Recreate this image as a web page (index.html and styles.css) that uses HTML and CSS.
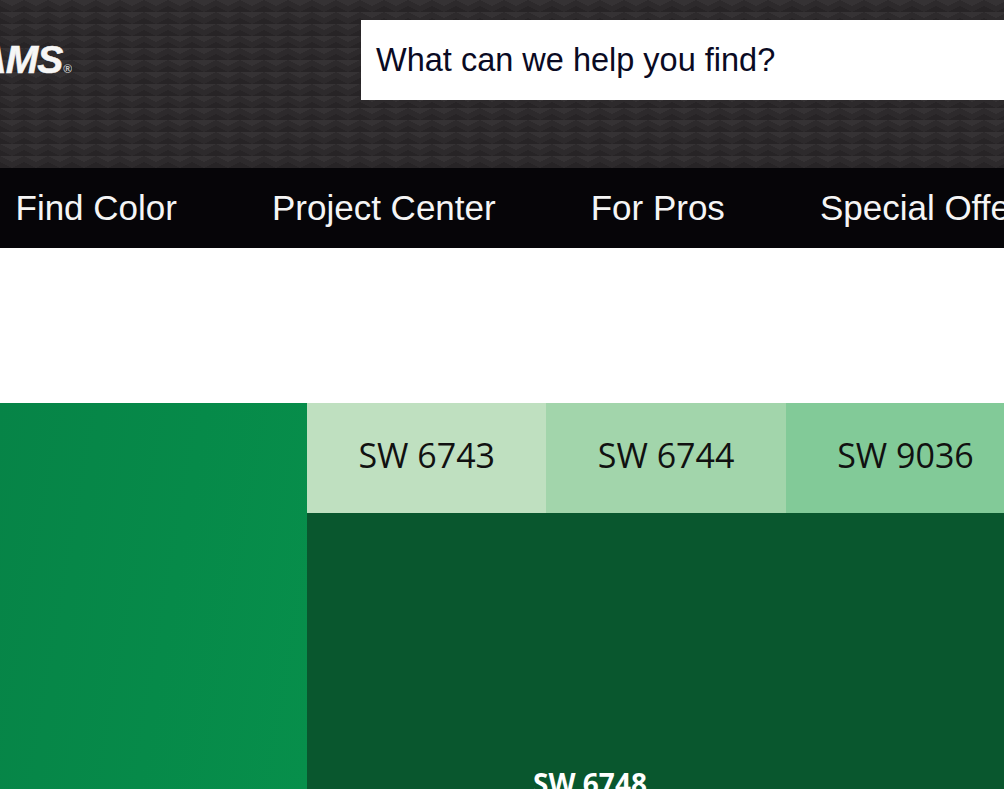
FILE: index.html
```html
<!DOCTYPE html>
<html lang="en">
  <head>
    <meta charset="UTF-8" />
    <meta name="viewport" content="width=device-width, initial-scale=1.0" />
    <title>Find Color</title>
    <link rel="stylesheet" href="styles.css">
  </head>
  <body>
    <header class="top-bar">
      <div class="logo">
        <span class="logo-text">WILLIAMS</span><span class="logo-mark">®</span>
      </div>
      <div class="search">What can we help you find?</div>
    </header>

    <nav class="main-nav">
      <a href="#">Find Color</a>
      <a href="#">Project Center</a>
      <a href="#">For Pros</a>
      <a href="#">Special Offers</a>
    </nav>

    <main class="palette">
      <div class="main-color"></div>
      <div class="shades">
        <div class="shade-row">
          <div class="shade shade-1">SW 6743</div>
          <div class="shade shade-2">SW 6744</div>
          <div class="shade shade-3">SW 9036</div>
        </div>
        <div class="deep-color">
          <span>SW 6748</span>
        </div>
      </div>
    </main>
  </body>
</html>
```

FILE: styles.css
```css
* {
  margin: 0;
  padding: 0;
  box-sizing: border-box;
}

html,
body {
  height: 789px;
  overflow: hidden;
}

body {
  background: white;
  font-family: "Liberation Sans", Arial, sans-serif;
}

.top-bar {
  display: flex;
  align-items: flex-start;
  height: 168px;
  background-color: #2d2a2c;
  background-image:
    linear-gradient(to bottom right, #353234 25%, transparent 25%),
    linear-gradient(to bottom left, #353234 25%, transparent 25%),
    linear-gradient(to top left, #272426 25%, transparent 25%),
    linear-gradient(to top right, #272426 25%, transparent 25%);
  background-position: -12px 0, -12px 0, 0 0, 0 0;
  background-size: 24px 12px;
  overflow: hidden;
}

.logo {
  display: flex;
  flex: 0 0 72px;
  justify-content: flex-end;
  align-items: baseline;
  height: 100px;
  padding-top: 38px;
  color: #f6f6f6;
  white-space: nowrap;
  overflow: hidden;
}

.logo-text {
  flex-shrink: 0;
  font-size: 39px;
  font-weight: 700;
  font-style: italic;
  letter-spacing: -1px;
  -webkit-text-stroke: 0.6px #f6f6f6;
}

.logo-mark {
  flex-shrink: 0;
  margin-left: 1px;
  color: #c4c4c4;
  font-size: 12px;
  font-weight: 700;
}

.search {
  flex: 1;
  height: 80px;
  margin: 20px 0 0 289px;
  padding-left: 15px;
  background: white;
  color: #0a0a23;
  font-size: 32.5px;
  line-height: 80px;
}

.main-nav {
  display: flex;
  gap: 95px;
  height: 80px;
  padding-left: 15.5px;
  background: #060508;
  white-space: nowrap;
  overflow: hidden;
}

.main-nav a {
  color: #f5f5f5;
  font-size: 35px;
  line-height: 80px;
  text-decoration: none;
}

.palette {
  display: flex;
  margin-top: 155px;
  height: 386px;
}

.main-color {
  flex: 0 0 307px;
  background: linear-gradient(100deg, #068447 0%, #068a49 55%, #078f4b 100%);
}

.shades {
  display: flex;
  flex: 1;
  flex-direction: column;
  min-width: 0;
  background: #09572e;
}

.shade-row {
  display: flex;
  flex: 0 0 110px;
}

.shade {
  flex: 0 0 239.4px;
  color: #111;
  font-family: "Open Sans", sans-serif;
  font-size: 34px;
  line-height: 104px;
  text-align: center;
}

.shade-1 {
  background: #bfe0c0;
}

.shade-2 {
  background: #a2d5ab;
}

.shade-3 {
  background: #82ca98;
}

.deep-color {
  flex: 1;
  width: 566px;
  padding-top: 255px;
  color: white;
  font-family: "Open Sans", sans-serif;
  font-size: 28px;
  font-weight: 700;
  line-height: 30px;
  text-align: center;
}
```
